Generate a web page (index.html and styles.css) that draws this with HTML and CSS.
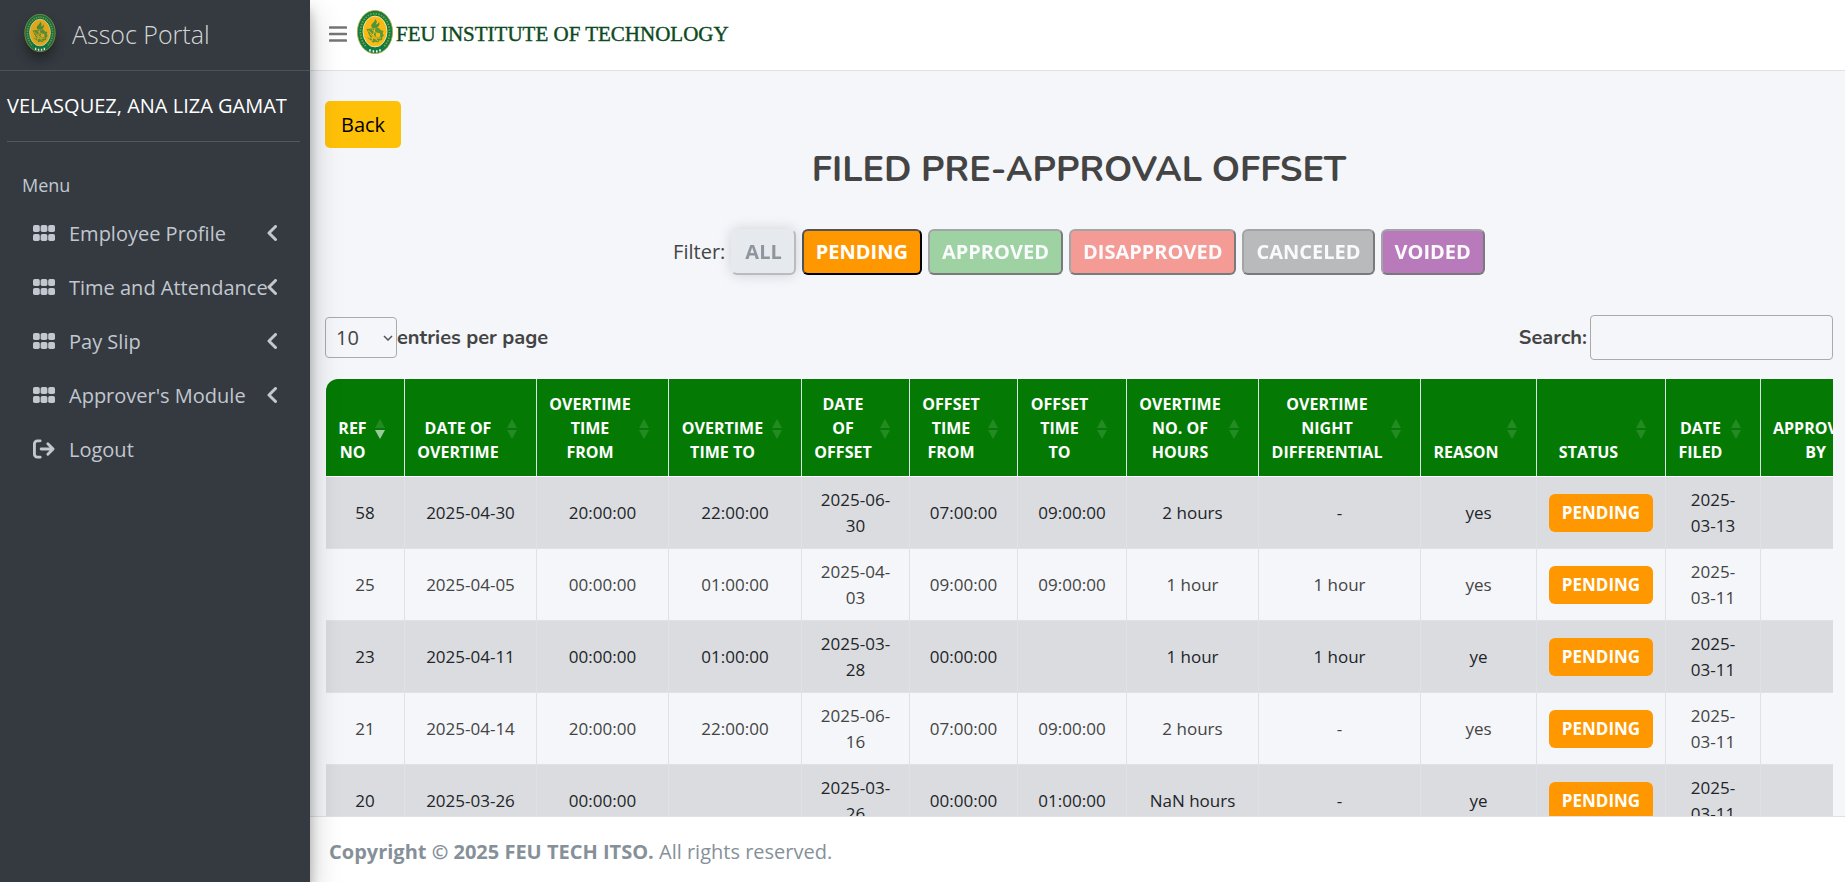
FILE: index.html
```html
<!DOCTYPE html>
<html lang="en">
<head>
<meta charset="utf-8">
<title>Assoc Portal</title>
<link rel="stylesheet" href="styles.css">
</head>
<body>
<svg width="0" height="0" class="defs" aria-hidden="true">
  <symbol id="seal" viewBox="0 0 36 44">
    <ellipse cx="18" cy="22" rx="17.6" ry="21.6" fill="#0b7d45" stroke="#b9a53a" stroke-width=".8"/>
    <ellipse cx="18" cy="22" rx="14.6" ry="18.4" fill="none" stroke="#d9b52a" stroke-width="1.8" stroke-dasharray="1.4 1.3" pathLength="100" opacity=".65"/>
    <path d="M9 37.5Q18 45 27 37.5L25.5 35Q18 40 10.500 35Z" fill="#0b7d45"/>
    <path d="M13 39.200v2.400M16.400 40.200v2.400M19.800 40.200v2.400M23 39.200v2.400" stroke="#fff" stroke-width="1.500"/>
    <ellipse cx="18" cy="21.500" rx="12" ry="15.400" fill="#fdb913" stroke="#f2e2a0" stroke-width="1"/>
    <path d="M18 9c3 2.500 1.500 4 .8 5.500 2-.3 3-1.500 3.200-2.700 1.500 3-.5 5.200-2.500 6.200h-4c-2-1.500-1.500-3.500.3-5 .9-.9 2.400-2 2.200-4z" fill="#4f943a"/>
    <path d="M9.500 19l12-1.200 2.500 2.400 2.500.6-.8 2.400 1.200 2.200-1.600 2-.2 2.600-2.600.6-1.500 2-2.500-.9-2.400 1-1.800-2-4.300-3.200 3.600.7z" fill="#5c9a38"/>
    <path d="M11 20.500l9 8M13 24l8 7M12 28h12M15 19.500l8 6M18 18l-3 13" stroke="#fdb913" stroke-width="1"/>
    <circle cx="21" cy="25" r="2.300" fill="#fdb913"/>
  </symbol>
  <symbol id="grid" viewBox="0 0 22 16">
    <rect x="0" y="0" width="6.800" height="7" rx="1.800"/><rect x="7.600" y="0" width="6.800" height="7" rx="1.800"/><rect x="15.200" y="0" width="6.800" height="7" rx="1.800"/>
    <rect x="0" y="9" width="6.800" height="7" rx="1.800"/><rect x="7.600" y="9" width="6.800" height="7" rx="1.800"/><rect x="15.200" y="9" width="6.800" height="7" rx="1.800"/>
  </symbol>
  <symbol id="chevron" viewBox="0 0 10 16">
    <path d="M8.500 1.500L2 8l6.500 6.500" fill="none" stroke="currentColor" stroke-width="3" stroke-linecap="round" stroke-linejoin="round"/>
  </symbol>
</svg>

<aside class="sidebar">
  <a class="brand" href="#"><svg class="brand-logo"><use href="#seal"/></svg><span>Assoc Portal</span></a>
  <div class="sidebar-body">
    <a class="user" href="#">VELASQUEZ, ANA LIZA GAMAT</a>
    <nav class="menu">
      <div class="menu-title">Menu</div>
      <a class="menu-item" href="#"><svg class="ico"><use href="#grid"/></svg><span class="label">Employee Profile</span><svg class="chev"><use href="#chevron"/></svg></a>
      <a class="menu-item" href="#"><svg class="ico"><use href="#grid"/></svg><span class="label">Time and Attendance</span><svg class="chev"><use href="#chevron"/></svg></a>
      <a class="menu-item" href="#"><svg class="ico"><use href="#grid"/></svg><span class="label">Pay Slip</span><svg class="chev"><use href="#chevron"/></svg></a>
      <a class="menu-item" href="#"><svg class="ico"><use href="#grid"/></svg><span class="label">Approver's Module</span><svg class="chev"><use href="#chevron"/></svg></a>
      <a class="menu-item" href="#"><svg class="ico exit" viewBox="0 0 23 20"><path d="M7.500 1.500H4.500a3 3 0 0 0-3 3v11a3 3 0 0 0 3 3h3M8.500 10H20.500M15.500 4.500l5.500 5.500-5.500 5.500" fill="none" stroke="currentColor" stroke-width="3" stroke-linecap="round" stroke-linejoin="round"/></svg><span class="label">Logout</span></a>
    </nav>
  </div>
</aside>

<div class="page">
  <header class="topbar">
    <button class="toggle" type="button" aria-label="Toggle menu"><svg width="18" height="16" viewBox="0 0 18 16"><path d="M1 1.500h16M1 8h16M1 14.500h16" stroke="#757575" stroke-width="2.600" stroke-linecap="round"/></svg></button>
    <a class="school" href="#"><svg class="school-logo"><use href="#seal"/></svg><span>FEU INSTITUTE OF TECHNOLOGY</span></a>
  </header>

  <main class="content">
    <button class="back" type="button">Back</button>
    <h1 class="title">FILED PRE-APPROVAL OFFSET</h1>
    <div class="filters">
      <span>Filter:</span>
      <button type="button" class="filter all">ALL</button>
      <button type="button" class="filter pending active">PENDING</button>
      <button type="button" class="filter approved">APPROVED</button>
      <button type="button" class="filter disapproved">DISAPPROVED</button>
      <button type="button" class="filter canceled">CANCELED</button>
      <button type="button" class="filter voided">VOIDED</button>
    </div>
    <div class="controls">
      <div class="length"><select id="len"><option>10</option><option>25</option><option>50</option></select><label for="len">entries per page</label></div>
      <div class="search"><label for="q">Search:</label><input id="q" type="search"></div>
    </div>
    <div class="table-wrap">
      <table class="grid">
        <colgroup><col class="w79"><col class="w132"><col class="w132"><col class="w133"><col class="w108"><col class="w108"><col class="w109"><col class="w132"><col class="w162"><col class="w116"><col class="w129"><col class="w95"><col class="w135"></colgroup>
        <thead>
          <tr>
            <th class="desc">REF<br>NO</th><th>DATE OF<br>OVERTIME</th><th>OVERTIME<br>TIME<br>FROM</th><th>OVERTIME<br>TIME TO</th><th>DATE<br>OF<br>OFFSET</th><th>OFFSET<br>TIME<br>FROM</th><th>OFFSET<br>TIME<br>TO</th><th>OVERTIME<br>NO. OF<br>HOURS</th><th>OVERTIME<br>NIGHT<br>DIFFERENTIAL</th><th>REASON</th><th>STATUS</th><th>DATE<br>FILED</th><th>APPROVED<br>BY</th>
          </tr>
        </thead>
        <tbody>
          <tr><td>58</td><td>2025-04-30</td><td>20:00:00</td><td>22:00:00</td><td>2025-06-<br>30</td><td>07:00:00</td><td>09:00:00</td><td>2 hours</td><td>-</td><td>yes</td><td><span class="badge">PENDING</span></td><td>2025-<br>03-13</td><td></td></tr>
          <tr><td>25</td><td>2025-04-05</td><td>00:00:00</td><td>01:00:00</td><td>2025-04-<br>03</td><td>09:00:00</td><td>09:00:00</td><td>1 hour</td><td>1 hour</td><td>yes</td><td><span class="badge">PENDING</span></td><td>2025-<br>03-11</td><td></td></tr>
          <tr><td>23</td><td>2025-04-11</td><td>00:00:00</td><td>01:00:00</td><td>2025-03-<br>28</td><td>00:00:00</td><td></td><td>1 hour</td><td>1 hour</td><td>ye</td><td><span class="badge">PENDING</span></td><td>2025-<br>03-11</td><td></td></tr>
          <tr><td>21</td><td>2025-04-14</td><td>20:00:00</td><td>22:00:00</td><td>2025-06-<br>16</td><td>07:00:00</td><td>09:00:00</td><td>2 hours</td><td>-</td><td>yes</td><td><span class="badge">PENDING</span></td><td>2025-<br>03-11</td><td></td></tr>
          <tr><td>20</td><td>2025-03-26</td><td>00:00:00</td><td></td><td>2025-03-<br>26</td><td>00:00:00</td><td>01:00:00</td><td>NaN hours</td><td>-</td><td>ye</td><td><span class="badge">PENDING</span></td><td>2025-<br>03-11</td><td></td></tr>
        </tbody>
      </table>
    </div>
  </main>

  <footer class="footer"><strong>Copyright © 2025 FEU TECH ITSO.</strong> All rights reserved.</footer>
</div>
</body>
</html>
```
FILE: styles.css
```css
* { box-sizing: border-box; }

body {
  margin: 0;
  height: 100vh;
  display: flex;
  overflow: hidden;
  font: 400 20px/30px "Open Sans", "Noto Sans", sans-serif;
  color: #444;
  background: #f4f6f9;
}

a { color: inherit; text-decoration: none; }
button, input, select { font: inherit; }
.defs { position: absolute; }

/* Sidebar */
.sidebar {
  position: relative;
  z-index: 2;
  flex: none;
  width: 310px;
  background: #343a40;
  color: #c2c7d0;
  box-shadow: 0 14px 28px rgba(0, 0, 0, .25), 0 10px 10px rgba(0, 0, 0, .22);
}
.brand {
  display: flex;
  align-items: center;
  gap: 16px;
  height: 71px;
  padding: 0 24px 2px;
  border-bottom: 1px solid #4b545c;
  font-size: 25px;
  font-weight: 300;
  color: rgba(255, 255, 255, .8);
}
.brand-logo {
  width: 32px;
  height: 38px;
  margin-bottom: 2px;
  opacity: .85;
  filter: drop-shadow(0 8px 6px rgba(0, 0, 0, .4));
}
.sidebar-body { padding: 0 10px 0 7px; }
.user {
  display: block;
  padding: 20px 0;
  border-bottom: 1px solid #4f5962;
  color: #fff;
  white-space: nowrap;
}
.menu-title { padding: 29px 15px 8px; font-size: 18px; line-height: 28px; }
.menu-item {
  display: flex;
  align-items: center;
  height: 54px;
  padding: 0 23px 0 26px;
}
.menu-item .label { flex: 1; min-width: 0; margin-left: 14px; white-space: nowrap; }
.ico { width: 22px; height: 16px; margin-bottom: 3px; fill: #c2c7d0; overflow: visible; }
.exit { height: 20px; }
.chev { width: 10px; height: 16px; margin-bottom: 3px; }

/* Main column */
.page { flex: 1; min-width: 0; display: flex; flex-direction: column; }
.topbar {
  flex: none;
  display: flex;
  align-items: center;
  gap: 10px;
  height: 71px;
  padding: 0 19px 2px;
  background: #fff;
  border-bottom: 1px solid #dee2e6;
}
.toggle { display: flex; padding: 0; border: 0; background: none; }
.school {
  display: flex;
  align-items: center;
  gap: 3px;
  font: 400 21px/30px "Liberation Serif", serif;
  color: #0d4a22;
  -webkit-text-stroke: 0.4px #0d4a22;
}
.school-logo { width: 36px; height: 44px; margin-bottom: 4px; }

.content { flex: 1; min-height: 0; overflow: hidden; padding: 30px 12px 0 15px; }
.back {
  display: block;
  height: 47px;
  padding: 0 16px;
  border: 0;
  border-radius: 5px;
  background: #ffc107;
  color: #000;
}
.title {
  margin: 0;
  font: 700 36px/44px Nunito, Lato, "Open Sans", sans-serif;
  text-align: center;
}
.filters { display: flex; justify-content: center; align-items: center; gap: 6px; margin-top: 37px; }
.filter {
  height: 46px;
  padding: 0 12px;
  border: 2px outset #000;
  border-radius: 6px;
  font-weight: 700;
  color: #fff;
  opacity: .5;
}
.filter.active { opacity: 1; }
.all {
  border-style: solid;
  border-color: #dadee3 #7d838b #7d838b #dadee3;
  background: #dadee3;
  color: #283643;
  box-shadow: 0 0 14px rgba(0, 0, 0, .3);
}
.pending { background: #ff9800; }
.approved { background: #4caf50; }
.disapproved { background: #f44336; }
.canceled { background: #808080; }
.voided { background: #800080; }

.controls {
  display: flex;
  justify-content: space-between;
  align-items: center;
  margin-top: 40px;
  font: 700 20px/30px Nunito, Lato, "Open Sans", sans-serif;
}
.length, .search { display: flex; align-items: center; }
.search { gap: 3px; }
.controls select {
  appearance: none;
  width: 72px;
  height: 41px;
  padding: 0 0 0 10px;
  border: 1px solid #aaa;
  border-radius: 4px;
  background: url("data:image/svg+xml,%3Csvg xmlns='http://www.w3.org/2000/svg' width='10' height='6' viewBox='0 0 10 6'%3E%3Cpath d='M1 1l4 4 4-4' fill='none' stroke='%23555' stroke-width='1.5'/%3E%3C/svg%3E") no-repeat right 3px center;
  font: 400 20px/30px "Open Sans", sans-serif;
  color: #444;
}
.controls input {
  width: 243px;
  height: 45px;
  border: 1px solid #aaa;
  border-radius: 4px;
  background: transparent;
}

/* Table */
.table-wrap { margin: 19px 0 0 1px; overflow: hidden; }
.grid {
  table-layout: fixed;
  width: 1570px;
  border-spacing: 0;
  font-size: 17px;
  line-height: 26px;
  text-align: center;
}
.w79 { width: 79px; }
.w95 { width: 95px; }
.w108 { width: 108px; }
.w109 { width: 109px; }
.w116 { width: 116px; }
.w129 { width: 129px; }
.w132 { width: 132px; }
.w133 { width: 133px; }
.w135 { width: 135px; }
.w162 { width: 162px; }

.grid th {
  position: relative;
  padding: 13px 37px 12px 12px;
  border-right: 1px solid #dee2e6;
  border-bottom: 1px solid #fff;
  background: #047a04;
  color: #fff;
  font-size: 16px;
  line-height: 24px;
  vertical-align: bottom;
  white-space: nowrap;
}
.grid th:first-child { border-top-left-radius: 12px; }
.grid th::before,
.grid th::after {
  content: "";
  position: absolute;
  right: 19px;
  border: 5px solid transparent;
  opacity: .13;
}
.grid th::before { bottom: 50%; border-top: 0; border-bottom: 9px solid #fff; }
.grid th::after { top: 50%; margin-top: 2px; border-bottom: 0; border-top: 9px solid #fff; }
.grid th.desc::after { opacity: .6; }

.grid td {
  height: 72px;
  padding: 10px 0 9px;
  border-right: 1px solid #dee2e6;
  border-bottom: 1px solid #dee2e6;
}
.grid tbody tr:nth-child(odd) td { background: #dbdce0; color: #212529; }
.badge {
  display: inline-block;
  padding: 6px 13px;
  border-radius: 6px;
  background: #ff9800;
  color: #fff;
  font-weight: 700;
}

.footer {
  flex: none;
  padding: 20px 19px 15px;
  border-top: 1px solid #dee2e6;
  background: #fff;
  color: #869099;
}
```
